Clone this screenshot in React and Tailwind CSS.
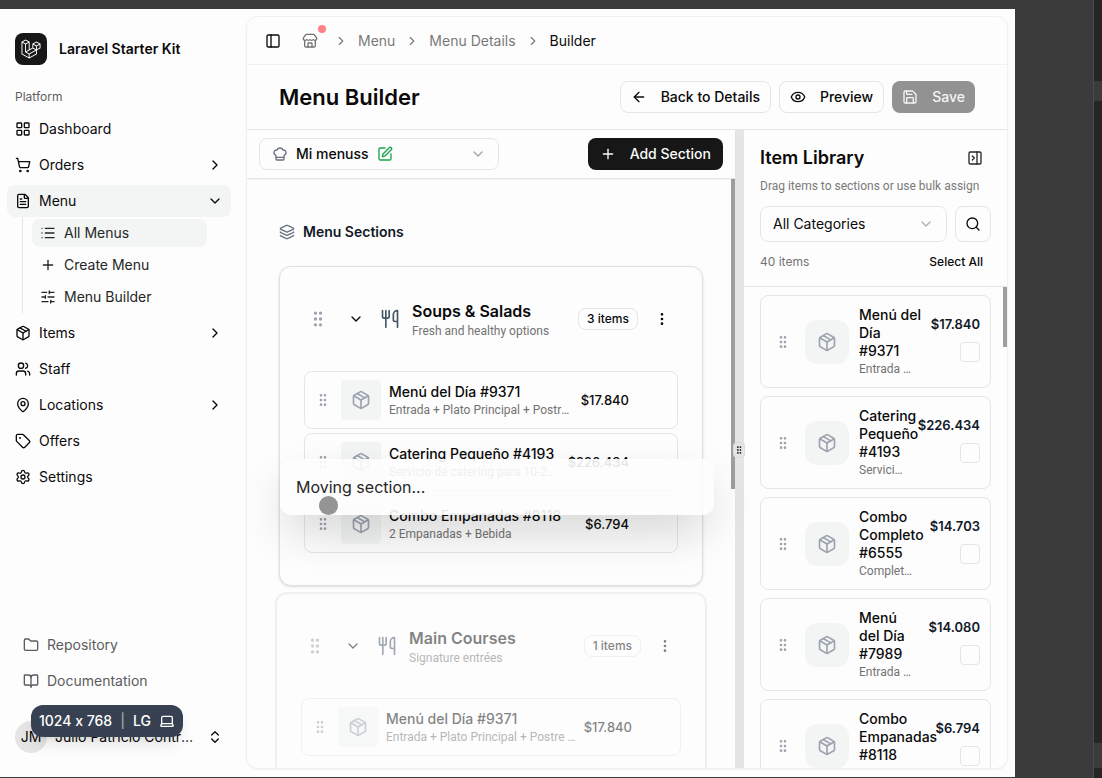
import React from 'react';
import {
  ArrowLeft, BookOpen, ChefHat, ChevronDown, ChevronRight, ChevronsUpDown, EllipsisVertical, Eye,
  FileText, Folder, GripVertical, Laptop, Layers, LayoutGrid, List, MapPin, Package, PanelLeft,
  PanelRightClose, Plus, Save, Search, Settings, ShoppingCart, SlidersHorizontal, SquarePen, Store,
  Tag, Users, Utensils,
} from 'lucide-react';

const NAV = [
  { label: 'Dashboard', icon: LayoutGrid },
  { label: 'Orders', icon: ShoppingCart, chevron: ChevronRight },
  {
    label: 'Menu',
    icon: FileText,
    chevron: ChevronDown,
    active: true,
    children: [
      { label: 'All Menus', icon: List, active: true },
      { label: 'Create Menu', icon: Plus },
      { label: 'Menu Builder', icon: SlidersHorizontal },
    ],
  },
  { label: 'Items', icon: Package, chevron: ChevronRight },
  { label: 'Staff', icon: Users },
  { label: 'Locations', icon: MapPin, chevron: ChevronRight },
  { label: 'Offers', icon: Tag },
  { label: 'Settings', icon: Settings },
];

const SECTIONS = [
  {
    title: 'Soups & Salads',
    description: 'Fresh and healthy options',
    count: '3 items',
    items: [
      { name: 'Menú del Día #9371', description: 'Entrada + Plato Principal + Postre + Bebida', price: '$17.840' },
      { name: 'Catering Pequeño #4193', description: 'Servicio de catering para 10-20 personas', price: '$226.434' },
      { name: 'Combo Empanadas #8118', description: '2 Empanadas + Bebida', price: '$6.794' },
    ],
  },
  {
    title: 'Main Courses',
    description: 'Signature entrées',
    count: '1 items',
    dragging: true,
    items: [
      { name: 'Menú del Día #9371', description: 'Entrada + Plato Principal + Postre + Bebida', price: '$17.840' },
    ],
  },
];

const LIBRARY = [
  { name: 'Menú del\nDía\n#9371', description: 'Entrada + Plato Principal', price: '$17.840' },
  { name: 'Catering\nPequeño\n#4193', description: 'Servicio de catering', price: '$226.434' },
  { name: 'Combo\nCompleto\n#6555', description: 'Completo + Bebida', price: '$14.703' },
  { name: 'Menú\ndel Día\n#7989', description: 'Entrada + Plato Principal', price: '$14.080' },
  { name: 'Combo\nEmpanadas\n#8118', description: '2 Empanadas + Bebida', price: '$6.794' },
];

function LaravelLogo() {
  return (
    <svg viewBox="0 0 40 42" className="size-5 fill-white" aria-hidden="true">
      <path
        fillRule="evenodd"
        clipRule="evenodd"
        d="M17.2 5.633 8.6.855 0 5.633v26.51l16.2 9 16.2-9v-8.442l7.6-4.223V9.856l-8.6-4.777-8.6 4.777V18.3l-5.6 3.111V5.633ZM38 18.301l-5.6 3.11v-6.157l5.6-3.11V18.3Zm-1.06-7.856-5.54 3.078-5.54-3.079 5.54-3.078 5.54 3.079ZM24.8 18.3v-6.157l5.6 3.111v6.158L24.8 18.3Zm-1 1.732 5.54 3.078-13.14 7.302-5.54-3.078 13.14-7.3v-.002Zm-16.2 7.89 7.6 4.222V38.3L2 30.966V7.92l5.6 3.111v16.892ZM8.6 9.3 3.06 6.222 8.6 3.143l5.54 3.08L8.6 9.3Zm21.8 15.51-13.2 7.334V38.3l13.2-7.334v-6.156ZM9.6 11.034l5.6-3.11v14.6l-5.6 3.11v-14.6Z"
      />
    </svg>
  );
}

function Sidebar() {
  return (
    <aside className="relative flex w-[246px] shrink-0 flex-col pr-[15px] pl-[7px] text-sm text-[#0a0a0a]">
      <a href="#home" className="mt-4 flex h-12 items-center gap-3 px-2">
        <span className="flex size-8 items-center justify-center rounded-lg bg-[#171717]">
          <LaravelLogo />
        </span>
        <span className="font-semibold">Laravel Starter Kit</span>
      </a>
      <p className="mt-2 flex h-8 items-center px-2 text-xs text-[#5f5f5f]">Platform</p>
      <nav className="flex flex-col gap-1">
        {NAV.map((item) => (
          <div key={item.label}>
            <a
              href="#nav"
              className={`flex h-8 items-center gap-2 rounded-lg px-2 ${item.active ? 'bg-[#f3f5f4]' : ''}`}
            >
              <item.icon size={16} />
              <span className="flex-1">{item.label}</span>
              {item.chevron && <item.chevron size={16} />}
            </a>
            {item.children && (
              <ul className="mr-6 ml-[15px] flex flex-col gap-1 border-l border-[#e5e5e5] py-0.5 pl-[9px]">
                {item.children.map((child) => (
                  <li key={child.label}>
                    <a
                      href="#nav"
                      className={`flex h-7 items-center gap-2 rounded-lg px-2 text-[#262626] ${child.active ? 'bg-[#f3f5f4]' : ''}`}
                    >
                      <child.icon size={16} />
                      {child.label}
                    </a>
                  </li>
                ))}
              </ul>
            )}
          </div>
        ))}
      </nav>
      <div className="mt-auto flex flex-col gap-1 px-2 text-[#5c5c5c]">
        <a href="#repo" className="flex h-8 items-center gap-2 px-2">
          <Folder size={16} />
          Repository
        </a>
        <a href="#docs" className="flex h-8 items-center gap-2 px-2">
          <BookOpen size={16} />
          Documentation
        </a>
      </div>
      <button type="button" className="mt-4 mb-4 flex h-12 items-center gap-2 px-2 text-left">
        <span className="flex size-8 shrink-0 items-center justify-center rounded-full bg-[#e5e5e5]">JM</span>
        <span className="min-w-0 flex-1 truncate">Julio Patricio Contreras</span>
        <ChevronsUpDown size={16} className="shrink-0" />
      </button>
      <div className="absolute bottom-10 left-[31px] flex h-8 items-center gap-2 rounded-xl bg-[#374151] px-2 font-medium text-white shadow-lg">
        <span>1024 x 768</span>
        <span className="text-[#9ca3af]">|</span>
        <span>LG</span>
        <Laptop size={16} />
      </div>
    </aside>
  );
}

function Breadcrumbs() {
  const links = ['Menu', 'Menu Details'];
  return (
    <header className="flex h-12 shrink-0 items-center border-b border-[#f0f0f0] px-[18px] text-sm">
      <button type="button" aria-label="Toggle sidebar" className="text-[#0a0a0a]">
        <PanelLeft size={16} />
      </button>
      <a href="#store" aria-label="Store" className="relative ml-[21px] text-[#737373]">
        <Store size={16} />
        <span className="absolute -top-2 -right-2 size-2 rounded-full bg-[#ff8086]" />
      </a>
      <nav className="ml-4 flex items-center gap-[10px] text-[#7a7a7a]">
        {links.map((label) => (
          <React.Fragment key={label}>
            <ChevronRight size={14} />
            <a href="#crumb">{label}</a>
          </React.Fragment>
        ))}
        <ChevronRight size={14} />
        <span className="text-[#0a0a0a]">Builder</span>
      </nav>
    </header>
  );
}

function TitleBar() {
  return (
    <div className="flex h-[65px] shrink-0 items-center gap-2 border-b border-[#e5e5e5] px-8">
      <h1 className="mr-auto text-[22px] font-semibold text-[#0a0a0a]">Menu Builder</h1>
      <button type="button" className="flex h-8 items-center gap-[14px] rounded-lg border border-[#e5e5e5] px-[10px] text-sm font-medium">
        <ArrowLeft size={16} />
        Back to Details
      </button>
      <button type="button" className="flex h-8 items-center gap-[14px] rounded-lg border border-[#e5e5e5] px-[10px] text-sm font-medium">
        <Eye size={16} />
        Preview
      </button>
      <button type="button" disabled className="flex h-8 items-center gap-[14px] rounded-lg bg-[#929292] px-[10px] text-sm font-medium text-[#f5f5f5]">
        <Save size={16} />
        Save
      </button>
    </div>
  );
}

function SectionItem({ item }) {
  return (
    <li className="flex items-center gap-2 rounded-lg border border-[#e5e5e5] p-2">
      <span className="p-0.5 text-[#9ca3af]">
        <GripVertical size={16} />
      </span>
      <span className="flex size-10 shrink-0 items-center justify-center rounded bg-[#f3f5f5] text-[#9ca3af]">
        <Package size={20} />
      </span>
      <div className="min-w-0 flex-1">
        <h4 className="truncate text-sm/5 font-medium">{item.name}</h4>
        <p className="truncate font-['Roboto',sans-serif] text-xs/4 text-[#737373]">{item.description}</p>
      </div>
      <span className="pr-10 text-[13px]/5 font-medium">{item.price}</span>
    </li>
  );
}

function Section({ section }) {
  return (
    <section
      className={`rounded-xl bg-[#fdfdfd] px-6 py-8 text-[#0a0a0a] ${
        section.dragging
          ? '-mx-1 border-2 border-[#e5e5e5] opacity-50'
          : 'border border-[#e0e0e0] shadow-sm'
      }`}
    >
      <header className="flex items-center">
        <button type="button" aria-label="Drag section" className="p-1 text-[#9ca3af]">
          <GripVertical size={20} />
        </button>
        <button type="button" aria-label="Collapse section" className="ml-2 p-2">
          <ChevronDown size={16} />
        </button>
        <Utensils size={20} className="ml-2 shrink-0 text-[#475569]" />
        <div className="ml-3 min-w-0 flex-1">
          <h3 className="truncate text-base/6 font-semibold">{section.title}</h3>
          <p className="truncate font-['Roboto',sans-serif] text-xs/4 text-[#737373]">{section.description}</p>
        </div>
        <span className="rounded-lg border border-[#e5e5e5] px-2 py-0.5 text-xs/4 font-medium">{section.count}</span>
        <button type="button" aria-label="Section actions" className="ml-2 p-2">
          <EllipsisVertical size={16} />
        </button>
      </header>
      <ul className="mt-8 flex flex-col gap-1">
        {section.items.map((item) => (
          <SectionItem key={item.name} item={item} />
        ))}
      </ul>
    </section>
  );
}

function Builder() {
  return (
    <div className="relative flex min-w-0 flex-1 flex-col">
      <div className="z-10 flex h-[49px] shrink-0 items-center justify-between border-b border-[#e5e5e5] px-3 shadow-xs">
        <label className="flex h-8 w-60 items-center gap-2 rounded-lg border border-[#e5e5e5] px-3">
          <ChefHat size={16} className="text-[#6b7280]" />
          <select aria-label="Menu" className="field-sizing-content appearance-none bg-transparent text-sm font-medium outline-none">
            <option>Mi menuss</option>
          </select>
          <SquarePen size={16} className="text-[#16a34a]" />
          <ChevronDown size={16} className="ml-auto text-[#a3a3a3]" />
        </label>
        <button type="button" className="flex h-8 items-center gap-[14px] rounded-lg bg-[#171717] px-3 text-sm font-medium text-[#fafafa]">
          <Plus size={16} />
          Add Section
        </button>
      </div>
      <div className="min-h-0 flex-1 overflow-hidden px-8 pt-[41px]">
        <h2 className="flex h-6 items-center gap-2 text-sm font-semibold text-[#111827]">
          <Layers size={16} className="text-[#6b7280]" />
          Menu Sections
        </h2>
        <div className="mt-[22px] flex flex-col gap-[6px]">
          {SECTIONS.map((section) => (
            <Section key={section.title} section={section} />
          ))}
        </div>
      </div>
      <div className="absolute top-12 right-0 h-[311px] w-1 bg-[#9e9e9e]" />
      <div className="absolute top-[329px] right-[21px] left-[33px] z-10 rounded-xl bg-[#fdfdfd]/90 p-4 text-base/6 text-[#262626] shadow-[0_20px_48px_-8px_rgba(0,0,0,0.2)]">
        Moving section...
        <span className="absolute top-[37px] left-[39px] size-[19px] rounded-full bg-[#949494]" />
      </div>
    </div>
  );
}

function LibraryItem({ item }) {
  return (
    <li className="flex items-center gap-[10px] rounded-lg border border-[#e5e5e5] p-[10px]">
      <span className="p-1 text-[#9ca3af]">
        <GripVertical size={16} />
      </span>
      <span className="flex size-11 shrink-0 items-center justify-center rounded-xl bg-[#f3f5f5] text-[#9ca3af]">
        <Package size={20} />
      </span>
      <div className="min-w-0 flex-1">
        <h4 className="text-sm/[18px] font-medium whitespace-pre text-[#0a0a0a]">{item.name}</h4>
        <p className="mt-px truncate font-['Roboto',sans-serif] text-xs/4 text-[#737373]">{item.description}</p>
      </div>
      <div className="flex flex-col items-end gap-2 self-start pt-2 pl-[3px]">
        <span className="text-[13px]/5 font-semibold text-[#111827]">{item.price}</span>
        <input
          type="checkbox"
          aria-label={`Select ${item.name}`}
          className="size-5 appearance-none rounded border border-[#e5e5e5] bg-[#fdfdfd]"
        />
      </div>
    </li>
  );
}

function ItemLibrary() {
  return (
    <aside className="relative flex w-[263px] shrink-0 flex-col">
      <div className="border-b border-[#e5e5e5] px-4 py-3">
        <div className="flex h-8 items-center justify-between">
          <h2 className="text-lg font-semibold text-[#0a0a0a]">Item Library</h2>
          <button type="button" aria-label="Collapse library" className="p-2 text-[#262626]">
            <PanelRightClose size={16} />
          </button>
        </div>
        <p className="mt-1 font-['Roboto',sans-serif] text-xs/4 whitespace-nowrap text-[#7a7a7a]">
          Drag items to sections or use bulk assign
        </p>
        <div className="mt-3 flex gap-2">
          <label className="flex h-9 flex-1 items-center rounded-lg border border-[#e5e5e5] px-3">
            <select aria-label="Category" className="flex-1 appearance-none bg-transparent text-sm outline-none">
              <option>All Categories</option>
            </select>
            <ChevronDown size={16} className="text-[#b0b0b0]" />
          </label>
          <button type="button" aria-label="Search" className="flex size-9 items-center justify-center rounded-lg border border-[#e5e5e5]">
            <Search size={16} />
          </button>
        </div>
        <div className="mt-2 flex h-6 items-center justify-between text-xs">
          <span className="text-[#737373]">40 items</span>
          <button type="button" className="px-2 font-medium">Select All</button>
        </div>
      </div>
      <ul className="flex min-h-0 flex-1 flex-col gap-2 overflow-hidden px-4 pt-2">
        {LIBRARY.map((item) => (
          <LibraryItem key={item.name} item={item} />
        ))}
      </ul>
      <div className="absolute top-[157px] right-0 h-[60px] w-1 bg-[#9e9e9e]" />
    </aside>
  );
}

export default function App() {
  return (
    <div className="flex h-screen bg-[#3b3b3b] font-['Inter',sans-serif] text-[#0a0a0a] [font-feature-settings:'calt'_0]">
      <div className="mt-[9px] mb-px flex min-w-0 flex-1 bg-[#fdfdfd]">
        <Sidebar />
        <main className="mt-[7px] mr-[7px] mb-2 flex min-w-0 flex-1 flex-col overflow-hidden rounded-xl border border-[#f0f0f0] shadow-xs">
          <Breadcrumbs />
          <TitleBar />
          <div className="flex min-h-0 flex-1">
            <Builder />
            <div className="relative w-[9px] shrink-0 bg-[#e5e5e5]">
              <div className="absolute top-[312px] -left-0.5 flex h-4 w-3 items-center justify-center rounded-sm border border-[#dcdcdc] bg-[#e5e5e5]">
                <GripVertical size={10} />
              </div>
            </div>
            <ItemLibrary />
          </div>
        </main>
      </div>
      <div className="w-[78px] shrink-0" />
      <div className="flex w-[9px] shrink-0 flex-col border-l border-[#4a4a4a] bg-[#262626]">
        <div className="mt-[81px] h-5 bg-[#3b3b3b]" />
        <div className="mt-auto mb-[10px] h-[25px] bg-[#3b3b3b]" />
      </div>
    </div>
  );
}
